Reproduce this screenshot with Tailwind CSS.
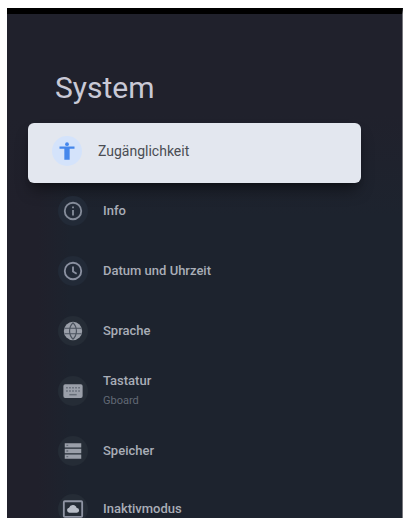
<!DOCTYPE html>
<html lang="de">
<head>
<meta charset="utf-8">
<meta name="viewport" content="width=device-width, initial-scale=1">
<title>System</title>
<script src="https://cdn.jsdelivr.net/npm/@tailwindcss/browser@4"></script>
</head>
<body class="h-screen overflow-hidden bg-white pt-2 pr-px pl-[7px] font-['Roboto','Liberation_Sans',sans-serif]">
<main class="h-full border-t-6 border-r border-t-black border-r-[#77777d] bg-[#1d232e] bg-[linear-gradient(to_bottom,#20212c_20%,transparent_40%),linear-gradient(to_right,#20202b_8%,transparent_16%)] pt-14">
  <h1 class="pl-12 text-[30px] leading-9 text-[#c9c9d6]">System</h1>
  <nav class="mt-[17px] mr-[41px] ml-[21px]" aria-label="System">
    <ul>
      <li class="-mb-0.5">
        <a href="#accessibility" aria-current="page" class="flex h-[60px] items-center gap-4 rounded-md bg-[#e3e7ef] pb-1 pl-6 text-sm text-[#4a4d53] shadow-lg shadow-black/40">
          <span class="grid size-[30px] shrink-0 place-items-center rounded-full bg-[#d4e3fb]">
            <svg class="size-5 text-[#4587ec]" viewBox="0 0 24 24" fill="currentColor" aria-hidden="true"><circle cx="12" cy="3.8" r="2.3"/><path d="M21 9.2h-5.8V22.5H8.8V9.2H3V6.6h18z"/></svg>
          </span>
          <span>Zugänglichkeit</span>
        </a>
      </li>
      <li>
        <a href="#info" class="flex h-[60px] items-center gap-[15px] pl-[30px] text-[13px] font-medium text-[#a9adb7]">
          <span class="grid size-[30px] shrink-0 place-items-center rounded-full bg-[#222a37]">
            <svg class="size-[22px] text-[#858c9a]" viewBox="0 0 24 24" fill="none" stroke="currentColor" stroke-width="2" aria-hidden="true"><circle cx="12" cy="12" r="9"/><path d="M12 11v6M12 7v2"/></svg>
          </span>
          <span>Info</span>
        </a>
      </li>
      <li>
        <a href="#date" class="flex h-[60px] items-center gap-[15px] pl-[30px] text-[13px] font-medium text-[#a9adb7]">
          <span class="grid size-[30px] shrink-0 place-items-center rounded-full bg-[#222a37]">
            <svg class="size-[22px] text-[#8b91a1]" viewBox="0 0 24 24" fill="none" stroke="currentColor" stroke-width="2" aria-hidden="true"><circle cx="12" cy="12" r="9"/><path d="M12 7v5.5l4 2.5"/></svg>
          </span>
          <span>Datum und Uhrzeit</span>
        </a>
      </li>
      <li>
        <a href="#language" class="flex h-[60px] items-center gap-[15px] pl-[30px] text-[13px] font-medium text-[#a9adb7]">
          <span class="grid size-[30px] shrink-0 place-items-center rounded-full bg-[#252c36]">
            <svg class="size-[22px]" viewBox="0 0 24 24" fill="none" aria-hidden="true"><circle cx="12" cy="12" r="10" fill="#9a9fa9"/><path d="M3 9h18M3 15h18M12 3c-5 5-5 13 0 18M12 3c5 5 5 13 0 18" stroke="#4b535f" stroke-width="1.3"/></svg>
          </span>
          <span>Sprache</span>
        </a>
      </li>
      <li>
        <a href="#keyboard" class="flex h-[60px] items-center gap-[15px] pl-[30px] text-[13px] font-medium text-[#a9adb7]">
          <span class="grid size-[30px] shrink-0 place-items-center rounded-full bg-[#252c36]">
            <svg class="size-[22px]" viewBox="0 0 24 24" aria-hidden="true"><rect x="1.5" y="4.5" width="21" height="15" rx="2" fill="#9a9fa9"/><path d="M4.5 8.5h15M4.5 12h15" stroke="#666d78" stroke-width="1.5" stroke-dasharray="1.8 1.5"/><path d="M8 16h8" stroke="#666d78" stroke-width="1.6"/></svg>
          </span>
          <span class="flex flex-col gap-1">
            <span class="leading-4">Tastatur</span>
            <span class="text-[11px] leading-4 font-normal text-[#626975]">Gboard</span>
          </span>
        </a>
      </li>
      <li>
        <a href="#storage" class="flex h-[60px] items-center gap-[15px] pl-[30px] text-[13px] font-medium text-[#a9adb7]">
          <span class="grid size-[30px] shrink-0 place-items-center rounded-full bg-[#252c36]">
            <svg class="size-[22px]" viewBox="0 0 24 24" aria-hidden="true"><path d="M3 3.5h18v4.8H3zM3 9.6h18v4.8H3zM3 15.7h18v4.8H3z" fill="#9a9fa9"/><path d="M4.8 5.9h2M4.8 12h2M4.8 18.1h2" stroke="#666d78" stroke-width="1.5"/></svg>
          </span>
          <span>Speicher</span>
        </a>
      </li>
      <li class="-mt-0.5">
        <a href="#ambient" class="flex h-[60px] items-center gap-[15px] pl-[30px] text-[13px] font-medium text-[#a9adb7]">
          <span class="grid size-[30px] shrink-0 place-items-center rounded-full bg-[#252c36]">
            <svg class="size-[22px] text-[#8f94a3]" viewBox="0 0 24 24" aria-hidden="true"><rect x="2" y="3.5" width="20" height="17" rx="1" fill="none" stroke="currentColor" stroke-width="2"/><path d="M8 16a2.8 2.8 0 0 1-.3-5.5A4.3 4.3 0 0 1 16 11a2.5 2.5 0 0 1 .3 5z" fill="#b8bdc7"/></svg>
          </span>
          <span>Inaktivmodus</span>
        </a>
      </li>
    </ul>
  </nav>
</main>
</body>
</html>
